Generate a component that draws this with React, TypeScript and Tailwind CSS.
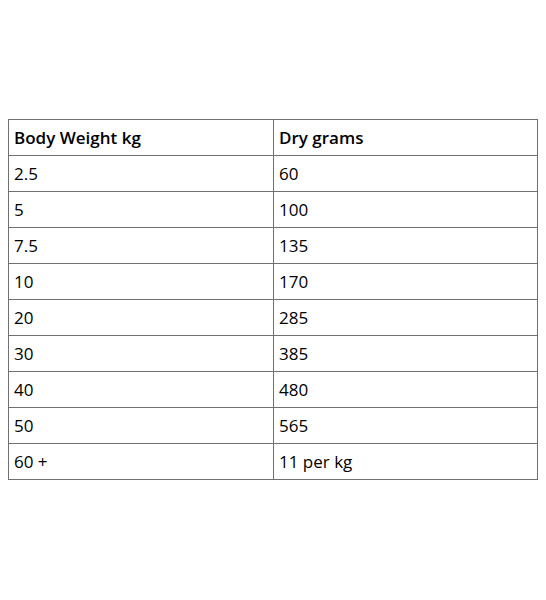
import React from 'react';

const rows: [string, string][] = [
  ['2.5', '60'],
  ['5', '100'],
  ['7.5', '135'],
  ['10', '170'],
  ['20', '285'],
  ['30', '385'],
  ['40', '480'],
  ['50', '565'],
  ['60 +', '11 per kg'],
];

export default function App() {
  return (
    <div className="w-[546px] h-[600px] bg-white pt-[119px] pl-[8px] font-['Open_Sans',sans-serif] text-[17px] text-black">
      <table className="w-[530px] border-collapse table-fixed">
        <colgroup>
          <col className="w-[265px]" />
          <col />
        </colgroup>
        <thead>
          <tr className="h-[36px]">
            <th className="border-[1.5px] border-[#707070] text-left font-semibold px-[5px] pt-[1px]">Body Weight kg</th>
            <th className="border-[1.5px] border-[#707070] text-left font-semibold px-[5px] pt-[1px]">Dry grams</th>
          </tr>
        </thead>
        <tbody>
          {rows.map(([w, g]) => (
            <tr key={w} className="h-[36px]">
              <td className="border-[1.5px] border-[#707070] px-[5px] pt-[1px]">{w}</td>
              <td className="border-[1.5px] border-[#707070] px-[5px] pt-[1px]">{g}</td>
            </tr>
          ))}
        </tbody>
      </table>
    </div>
  );
}
